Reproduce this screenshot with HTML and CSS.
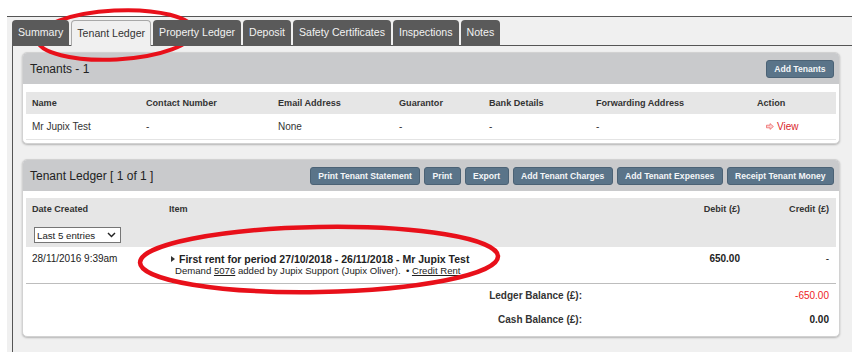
FILE: index.html
```html
<!DOCTYPE html>
<html lang="en">

<head>
    <meta charset="UTF-8">
    <meta name="viewport" content="width=device-width, initial-scale=1.0">
    <link rel="stylesheet" href="styles.css">
    <title>Tenant Ledger</title>
</head>

<body>
    <div class="page">
        <div class="tabs">
            <span class="tab">Summary</span>
            <span class="tab active">Tenant Ledger</span>
            <span class="tab">Property Ledger</span>
            <span class="tab">Deposit</span>
            <span class="tab">Safety Certificates</span>
            <span class="tab">Inspections</span>
            <span class="tab">Notes</span>
        </div>

        <div class="tab-body">
            <div class="panel">
                <div class="panel-head">
                    <span class="panel-title">Tenants - 1</span>
                    <div class="actions">
                        <span class="btn">Add Tenants</span>
                    </div>
                </div>
                <div class="panel-body">
                    <div class="tenants thead">
                        <span>Name</span>
                        <span>Contact Number</span>
                        <span>Email Address</span>
                        <span>Guarantor</span>
                        <span>Bank Details</span>
                        <span>Forwarding Address</span>
                        <span>Action</span>
                    </div>
                    <div class="tenants trow">
                        <span>Mr Jupix Test</span>
                        <span>-</span>
                        <span>None</span>
                        <span>-</span>
                        <span>-</span>
                        <span>-</span>
                        <span class="view">
                            <svg width="8" height="7" viewBox="0 0 8 7">
                                <path d="M0.5 2.2H4V0.6L7.4 3.5L4 6.4V4.8H0.5Z" fill="#fbd3d3" stroke="#ef6a6a" stroke-width="0.8" />
                            </svg>
                            View
                        </span>
                    </div>
                </div>
            </div>

            <div class="panel ledger">
                <div class="panel-head">
                    <span class="panel-title">Tenant Ledger [ 1 of 1 ]</span>
                    <div class="actions">
                        <span class="btn">Print Tenant Statement</span>
                        <span class="btn">Print</span>
                        <span class="btn">Export</span>
                        <span class="btn">Add Tenant Charges</span>
                        <span class="btn">Add Tenant Expenses</span>
                        <span class="btn">Receipt Tenant Money</span>
                    </div>
                </div>
                <div class="panel-body">
                    <div class="entries thead">
                        <div>
                            <div class="th">Date Created</div>
                            <div class="select">
                                <span>Last 5 entries</span>
                                <svg width="9" height="6" viewBox="0 0 9 6">
                                    <path d="M1 1L4.5 4.6L8 1" fill="none" stroke="#222" stroke-width="1.4" />
                                </svg>
                            </div>
                        </div>
                        <div class="th">Item</div>
                        <div class="th num">Debit (£)</div>
                        <div class="th num">Credit (£)</div>
                    </div>
                    <div class="entries trow">
                        <div>28/11/2016 9:39am</div>
                        <div class="item">
                            <div class="item-title">
                                <svg width="4" height="6" viewBox="0 0 4 6">
                                    <path d="M0 0L4 3L0 6Z" fill="#333" />
                                </svg>
                                First rent for period 27/10/2018 - 26/11/2018 - Mr Jupix Test
                            </div>
                            <div class="item-sub">Demand <u>5076</u> added by Jupix Support (Jupix Oliver). &nbsp;• <u>Credit Rent</u></div>
                        </div>
                        <div class="num strong">650.00</div>
                        <div class="num">-</div>
                    </div>
                    <div class="balances">
                        <div class="balance">
                            <span class="label">Ledger Balance (£):</span>
                            <span class="value negative">-650.00</span>
                        </div>
                        <div class="balance">
                            <span class="label">Cash Balance (£):</span>
                            <span class="value strong">0.00</span>
                        </div>
                    </div>
                </div>
            </div>
        </div>
    </div>

    <svg class="marks" width="852" height="352" viewBox="0 0 852 352">
        <ellipse cx="115.5" cy="35" rx="78.5" ry="24.5" transform="rotate(-3 115.5 35)" fill="none" stroke="#e8101a" stroke-width="4" />
        <ellipse cx="319" cy="259.5" rx="179" ry="32.5" transform="rotate(-1 319 259.5)" fill="none" stroke="#e8101a" stroke-width="4.5" />
    </svg>
</body>

</html>
```

FILE: styles.css
```css
body {
  margin: 0;
  font-family: "Liberation Sans", Arial, sans-serif;
  color: #222222;
  background: #ffffff;
}

.page {
  display: flex;
  flex-direction: column;
  min-height: calc(100vh - 16px);
  margin: 16px 0 0 7px;
  padding-top: 3px;
  border-top: 1px solid #555555;
  background: #f0f0f0;
  box-sizing: border-box;
}

.tabs {
  position: relative;
  z-index: 1;
  display: flex;
  gap: 2px;
  padding-left: 5px;
  margin-bottom: -1px;
}

.tab {
  height: 26px;
  padding: 0 6px;
  line-height: 25px;
  font-size: 10.6px;
  color: #f2f2f2;
  background: #5a5a5a;
  border-radius: 4px 4px 0 0;
  box-sizing: border-box;
}

.tab.active {
  color: #333333;
  background: #f0f0f0;
  border: 1px solid #a8a8a8;
  border-bottom: none;
  line-height: 24px;
  padding: 0 5px;
}

.tab-body {
  flex: 1;
  margin-left: 5px;
  padding: 6px 12px 0 9px;
  border-top: 1px solid #555555;
  border-left: 1px solid #555555;
}

.panel {
  background: #ffffff;
  border: 1px solid #d2d2d2;
  border-radius: 5px;
  box-shadow: 0 1px 2px rgba(0, 0, 0, 0.25);
  overflow: hidden;
}

.panel + .panel {
  margin-top: 15px;
}

.panel-head {
  display: flex;
  align-items: center;
  justify-content: space-between;
  height: 31px;
  padding: 0 5px 0 7px;
  background: #c9cacc;
}

.panel-title {
  font-size: 12px;
  color: #222222;
}

.actions {
  display: flex;
  gap: 4px;
}

.btn {
  height: 18px;
  padding: 0 7.4px;
  line-height: 16px;
  font-size: 8.6px;
  font-weight: bold;
  color: #f4f6f8;
  background: #5a7489;
  border: 1px solid #4b6275;
  border-radius: 3px;
  box-sizing: border-box;
}

.panel-body {
  padding: 8px 3px 3px;
}

.ledger .panel-body {
  padding: 7px 3px 4px;
}

.tenants {
  display: grid;
  grid-template-columns: 114px 132px 121px 90px 107px 161px 85px;
}

.tenants span {
  padding-left: 6px;
}

.thead {
  background: #e6e6e6;
  font-size: 9.1px;
  font-weight: bold;
  color: #333333;
}

.tenants.thead {
  height: 22px;
  line-height: 22px;
}

.tenants.trow {
  height: 25px;
  line-height: 25px;
  font-size: 10px;
  color: #333333;
  border-bottom: 1px solid #e4e4e4;
}

.view {
  display: flex;
  align-items: center;
  gap: 3px;
  padding-left: 15px !important;
  color: #d9262b;
}

.entries {
  display: grid;
  grid-template-columns: 137px 463px 120px 90px;
}

.entries > div {
  padding-left: 6px;
}

.entries > .num {
  padding: 0 6px 0 0;
  text-align: right;
}

.entries > .num:last-child {
  padding-right: 7px;
}

.entries.thead {
  height: 49px;
  padding-top: 3px;
  box-sizing: border-box;
}

.th {
  line-height: 16px;
}

.select {
  display: flex;
  align-items: center;
  justify-content: space-between;
  width: 87px;
  height: 16px;
  margin: 10px 0 0 2px;
  padding: 0 4px 0 2px;
  font-size: 9.7px;
  font-weight: normal;
  color: #222222;
  background: #ffffff;
  border: 1px solid #767676;
  box-sizing: border-box;
}

.entries.trow {
  padding: 6px 0;
  font-size: 10px;
  line-height: 12px;
  color: #222222;
}

.item {
  padding-left: 8px !important;
}

.item-title {
  display: flex;
  align-items: center;
  gap: 4px;
  font-size: 10.5px;
  font-weight: bold;
}

.item-sub {
  padding-left: 4px;
  font-size: 9.6px;
}

.strong {
  font-weight: bold;
}

.balances {
  border-top: 1px solid #bdbdbd;
}

.balance {
  display: flex;
  height: 24px;
  line-height: 24px;
  font-size: 10px;
}

.balance .label {
  width: 556px;
  font-weight: bold;
  text-align: right;
  color: #333333;
}

.balance .value {
  flex: 1;
  padding-right: 7px;
  text-align: right;
}

.negative {
  color: #ee1c24;
}

.marks {
  position: absolute;
  top: 0;
  left: 0;
  pointer-events: none;
}
```
